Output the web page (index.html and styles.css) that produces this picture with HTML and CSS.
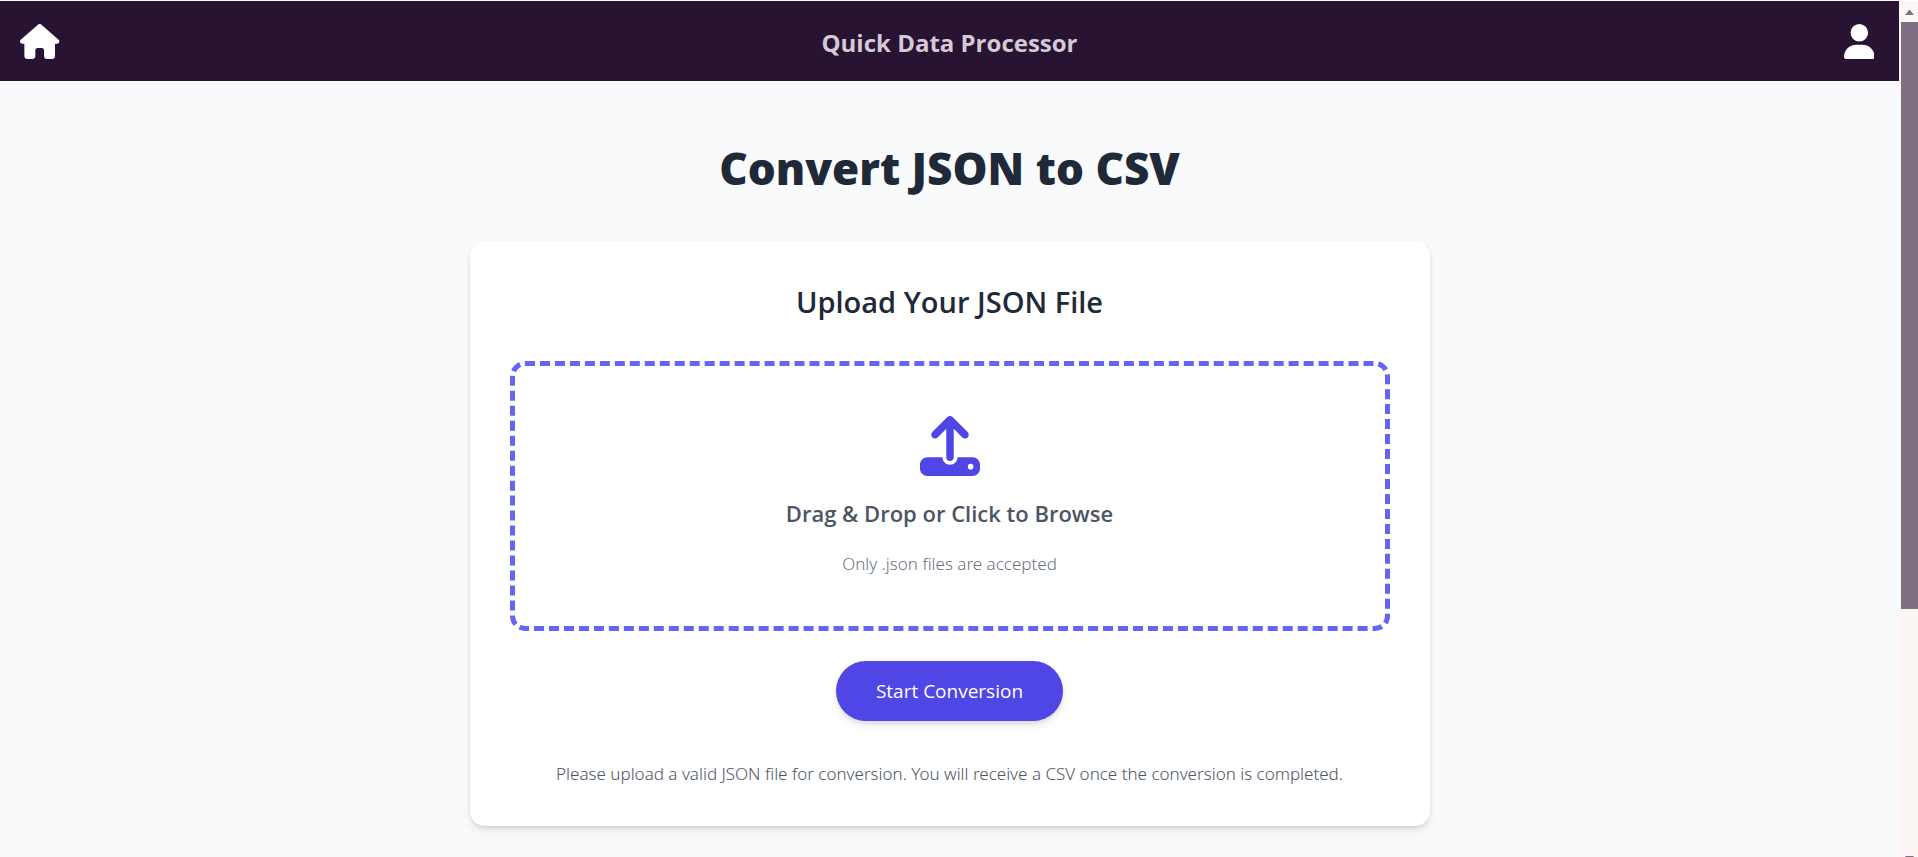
FILE: index.html
```html
<!DOCTYPE html>
<html lang="en">
<head>
<meta charset="utf-8">
<meta name="viewport" content="width=device-width, initial-scale=1">
<title>Convert JSON to CSV</title>
<link rel="stylesheet" href="styles.css">
</head>
<body>
<div class="page">
  <header class="topbar">
    <a class="nav-icon" href="#" aria-label="Home">
      <svg viewBox="0 0 576 512" aria-hidden="true"><path d="M575.8 255.5c0 18-15 32.1-32 32.1h-32l.7 160.2c0 2.7-.2 5.4-.5 8.1V472c0 22.1-17.9 40-40 40H456c-1.1 0-2.2 0-3.3-.1c-1.4 .1-2.8 .1-4.2 .1H416 392c-22.1 0-40-17.9-40-40V448 384c0-17.7-14.3-32-32-32H256c-17.7 0-32 14.3-32 32v64 24c0 22.1-17.9 40-40 40H160 128.1c-1.5 0-3-.1-4.5-.2c-1.2 .1-2.4 .2-3.6 .2H104c-22.1 0-40-17.9-40-40V360c0-.9 0-1.9 .1-2.8V287.6H32c-18 0-32-14-32-32.1c0-9 3-17 10-24L266.4 8c7-7 15-8 22-8s15 2 21 7L564.8 231.5c8 7 12 15 11 24z"/></svg>
    </a>
    <p class="brand">Quick Data Processor</p>
    <a class="nav-icon" href="#" aria-label="Account">
      <svg viewBox="0 0 448 512" aria-hidden="true"><path d="M224 256A128 128 0 1 0 224 0a128 128 0 1 0 0 256zm-45.7 48C79.8 304 0 383.8 0 482.3C0 498.7 13.3 512 29.7 512H418.3c16.4 0 29.7-13.3 29.7-29.7C448 383.8 368.2 304 269.7 304H178.3z"/></svg>
    </a>
  </header>
  <main class="content">
    <h1 class="title">Convert JSON to CSV</h1>
    <form class="card">
      <h2 class="card-title">Upload Your JSON File</h2>
      <label class="dropzone" for="json-file">
        <svg class="upload-icon" viewBox="0 0 512 512" aria-hidden="true"><path d="M288 109.3V352c0 17.7-14.3 32-32 32s-32-14.3-32-32V109.3l-73.4 73.4c-12.5 12.5-32.8 12.5-45.3 0s-12.5-32.8 0-45.3l128-128c12.5-12.5 32.8-12.5 45.3 0l128 128c12.5 12.5 12.5 32.8 0 45.3s-32.8 12.5-45.3 0L288 109.3zM64 352H192c0 35.3 28.7 64 64 64s64-28.7 64-64H448c35.3 0 64 28.7 64 64v32c0 35.3-28.7 64-64 64H64c-35.3 0-64-28.7-64-64V416c0-35.3 28.7-64 64-64zM432 456a24 24 0 1 0 0-48 24 24 0 1 0 0 48z"/></svg>
        <span class="drop-text">Drag &amp; Drop or Click to Browse</span>
        <span class="drop-hint">Only .json files are accepted</span>
      </label>
      <input id="json-file" type="file" accept=".json" hidden>
      <button class="submit" type="button">Start Conversion</button>
      <p class="note">Please upload a valid JSON file for conversion. You will receive a CSV once the conversion is completed.</p>
    </form>
  </main>
</div>
<div class="scrollbar" aria-hidden="true">
  <svg class="arrow" viewBox="0 0 9 5"><path d="M4 0h1l4 5H0z"/></svg>
  <div class="thumb"></div>
  <svg class="arrow arrow-down" viewBox="0 0 9 5"><path d="M0 0h9L5 5H4z"/></svg>
</div>
</body>
</html>
```
FILE: styles.css
```css
* {
  box-sizing: border-box;
}

body {
  margin: 0;
  display: flex;
  min-height: 100vh;
  border-top: 1px solid #fff;
  background: #f9fafb;
  color: #1f2937;
  font-family: "Segoe UI", "Open Sans", "Noto Sans", sans-serif;
}

h1, h2, p {
  margin: 0;
}

.page {
  flex: 1;
  min-width: 0;
}

.topbar {
  display: flex;
  align-items: center;
  justify-content: space-between;
  height: 80px;
  padding: 0 20px;
  background: #281333;
}

.nav-icon {
  display: flex;
  justify-content: center;
  width: 40px;
}

.nav-icon svg {
  height: 35px;
  fill: #fff;
}

.brand {
  padding-top: 2px;
  color: #d4cad3;
  font-size: 24px;
  font-weight: 700;
}

.content {
  display: flex;
  flex-direction: column;
  align-items: center;
  gap: 46px;
  padding: 60px 20px 30px;
}

.title {
  font-size: 44px;
  font-weight: 800;
  line-height: 54px;
}

.card {
  display: flex;
  flex-direction: column;
  align-items: center;
  width: 100%;
  max-width: 960px;
  padding: 40px;
  border-radius: 15px;
  background: #fff;
  box-shadow: 0 5px 8px -1px rgba(0, 0, 0, 0.1), 0 2px 5px -1px rgba(0, 0, 0, 0.1);
  text-align: center;
}

.card-title {
  margin-bottom: 38px;
  font-size: 29px;
  font-weight: 600;
  line-height: 42px;
}

.dropzone {
  display: flex;
  flex-direction: column;
  align-items: center;
  gap: 20px;
  width: 100%;
  padding: 50px;
  border: 5px dashed #6366f1;
  border-radius: 15px;
  cursor: pointer;
}

.upload-icon {
  width: 60px;
  height: 60px;
  fill: #4f46e5;
}

.drop-text {
  color: #4b5563;
  font-size: 22px;
  font-weight: 600;
  line-height: 35px;
}

.drop-hint {
  color: #6b7280;
  font-family: "Segoe UI", "Noto Sans", sans-serif;
  font-size: 17px;
  font-weight: 300;
  line-height: 25px;
}

.submit {
  height: 60px;
  margin: 30px 0 40px;
  padding: 0 40px;
  border: 0;
  border-radius: 30px;
  background: #4f46e5;
  color: #fff;
  box-shadow: 0 5px 8px -1px rgba(0, 0, 0, 0.1), 0 2px 5px -1px rgba(0, 0, 0, 0.1);
  font: inherit;
  font-size: 19px;
}

.note {
  color: #4b5563;
  font-family: "Segoe UI", "Noto Sans", sans-serif;
  font-size: 17px;
  font-weight: 300;
  line-height: 25px;
}

.scrollbar {
  display: flex;
  flex-direction: column;
  width: 19px;
  height: calc(100vh - 1px);
  overflow: hidden;
  padding: 9px 0 0 2px;
  background: #fcf6f4;
}

.arrow {
  flex: none;
  width: 9px;
  height: 5px;
  margin: 0 4px;
  fill: #806f82;
}

.thumb {
  flex: none;
  height: 69.3%;
  margin: 7px 0 auto;
  background: #806f82;
}

.arrow-down {
  margin-bottom: -4px;
}
```
